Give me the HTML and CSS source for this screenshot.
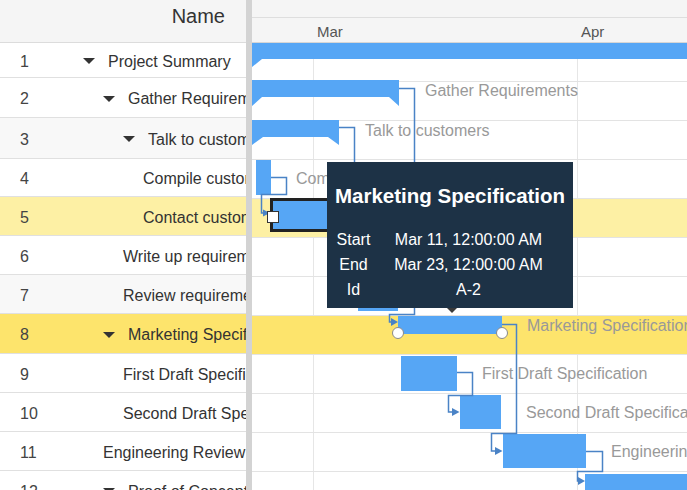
FILE: index.html
```html
<!DOCTYPE html>
<html>
<head>
<meta charset="utf-8">
<title>Gantt</title>
<link rel="stylesheet" href="styles.css">
</head>
<body>
<div class="gantt">
  <section class="grid">
    <div class="grid-head"><span>Name</span></div>
    <div class="row h35"><span class="num">1</span><span class="name"><i class="caret"></i>Project Summary</span></div>
    <div class="row h40"><span class="num">2</span><span class="name l1"><i class="caret"></i>Gather Requirements</span></div>
    <div class="row h41 alt"><span class="num">3</span><span class="name l2"><i class="caret"></i>Talk to customers</span></div>
    <div class="row h38"><span class="num">4</span><span class="name l3">Compile customer list</span></div>
    <div class="row sel-light"><span class="num">5</span><span class="name l3">Contact customers</span></div>
    <div class="row"><span class="num">6</span><span class="name l2">Write up requirements</span></div>
    <div class="row alt"><span class="num">7</span><span class="name l2">Review requirements</span></div>
    <div class="row h40 sel"><span class="num">8</span><span class="name l1"><i class="caret"></i>Marketing Specification</span></div>
    <div class="row"><span class="num">9</span><span class="name l2">First Draft Specification</span></div>
    <div class="row"><span class="num">10</span><span class="name l2">Second Draft Specification</span></div>
    <div class="row"><span class="num">11</span><span class="name l1">Engineering Review</span></div>
    <div class="row"><span class="num">12</span><span class="name l1"><i class="caret"></i>Proof of Concept</span></div>
  </section>
  <div class="splitter"></div>
  <section class="chart">
    <div class="time-head">
      <div class="band-top"></div>
      <div class="band-months">
        <span></span>
        <span class="month">Mar</span>
        <span class="month">Apr</span>
      </div>
    </div>
    <div class="chart-body">
      <div class="c-row h35"></div>
      <div class="c-row h40"></div>
      <div class="c-row h41"></div>
      <div class="c-row h38"></div>
      <div class="c-row sel-light"></div>
      <div class="c-row"></div>
      <div class="c-row"></div>
      <div class="c-row h40 sel"></div>
      <div class="c-row"></div>
      <div class="c-row"></div>
      <div class="c-row"></div>
      <div class="c-row"></div>

      <svg class="canvas" viewBox="252 43 435 447" width="435" height="447">
        <g class="bar">
          <polygon points="252,43 700,43 700,59 262,59 252,67"/>
          <polygon points="252,80 399,80 399,106 389,97 262,97 252,106"/>
          <polygon points="252,120 339,120 339,145 328,137 263,137 252,145"/>
          <rect x="256" y="160" width="15" height="35"/>
          <rect x="358" y="277" width="40" height="34"/>
          <rect x="398" y="316" width="104" height="18"/>
          <rect x="401" y="356" width="56" height="35"/>
          <rect x="460" y="395" width="41" height="34"/>
          <rect x="503" y="434" width="83" height="34"/>
          <rect x="585" y="474" width="120" height="36"/>
          <rect class="picked" x="271.5" y="199.5" width="75" height="31"/>
        </g>
        <g class="link">
          <path d="M399 88.5 H414.5 V314.5 H389.5 V322 H392"/>
          <path d="M339 127.5 H354.5 V175"/>
          <path d="M271 177.5 H286.5 V194.5 H261.5 V213 H264"/>
          <path d="M502 324.5 H516.5 V433.5 H491.5 V451 H495"/>
          <path d="M457 372.5 H472.5 V395.5 H448.5 V412 H452"/>
          <path d="M586 451.5 H602.5 V471.5 H577.5 V481 H579"/>
        </g>
        <g class="arrow">
          <polygon points="391,318 398,322 391,326"/>
          <polygon points="263,209.5 270,213 263,216.5"/>
          <polygon points="495,447 502.5,451 495,455"/>
          <polygon points="452,408 459.5,412 452,416"/>
          <polygon points="578,477 585,481 578,485"/>
        </g>
        <rect class="handle-sq" x="267.5" y="211.5" width="11" height="11"/>
        <circle class="handle" cx="398" cy="333" r="5.5"/>
        <circle class="handle" cx="502" cy="333" r="5.5"/>
        <g class="label">
          <text x="425" y="95.5">Gather Requirements</text>
          <text x="365" y="135.5">Talk to customers</text>
          <text x="296" y="183.5">Compile customer list</text>
          <text x="423" y="299">Review requirements</text>
          <text x="527" y="331">Marketing Specification</text>
          <text x="482" y="378.5">First Draft Specification</text>
          <text x="526" y="417.5">Second Draft Specification</text>
          <text x="611" y="456.5">Engineering Review</text>
        </g>
      </svg>

      <div class="tooltip">
        <div class="tt-title">Marketing Specification</div>
        <div class="tt-table">
          <span>Start</span><span>Mar 11, 12:00:00 AM</span>
          <span>End</span><span>Mar 23, 12:00:00 AM</span>
          <span>Id</span><span>A-2</span>
        </div>
        <i class="tt-arrow"></i>
      </div>
    </div>
  </section>
</div>
</body>
</html>
```
FILE: styles.css
```css
* { box-sizing: border-box; }
html, body { margin: 0; padding: 0; }
body {
  font-family: "Liberation Sans", Arial, sans-serif;
  background: #fff;
  overflow: hidden;
}
.gantt {
  display: flex;
  width: 687px;
  height: 490px;
  overflow: hidden;
}

/* ---- left grid ---- */
.grid {
  width: 246px;
  flex: none;
  overflow: hidden;
}
.grid-head {
  height: 43px;
  background: #f5f5f5;
  border-bottom: 1px solid #dcdcdc;
  display: flex;
  justify-content: flex-end;
  padding: 5px 21px 0 0;
  font-size: 20px;
  color: #333;
}
.row {
  display: flex;
  align-items: center;
  height: 39px;
  padding-top: 3px;
  border-bottom: 1px solid #e0e0e0;
  font-size: 16px;
  color: #333;
  white-space: nowrap;
  background: #fff;
}
.h35 { height: 35px; }
.h38 { height: 38px; }
.h40 { height: 40px; }
.h41 { height: 41px; }
.alt { background: #f8f8f8; }
.sel-light { background: #fdf0a4; }
.sel { background: #fde46c; }
.num {
  flex: none;
  width: 83px;
  padding-left: 20px;
  color: #444;
}
.name {
  display: flex;
  align-items: center;
}
.l1 { padding-left: 20px; }
.l2 { padding-left: 40px; }
.l3 { padding-left: 60px; }
.caret {
  width: 0;
  height: 0;
  border-left: 6px solid transparent;
  border-right: 6px solid transparent;
  border-top: 6px solid #333;
  margin-right: 13px;
  margin-top: -1px;
}

.splitter {
  flex: none;
  width: 6px;
  background: #d3d3d3;
}

/* ---- chart ---- */
.chart {
  flex: 1;
  min-width: 0;
  overflow: hidden;
}
.time-head { background: #f5f5f5; }
.band-top {
  height: 18px;
  border-bottom: 1px solid #dedede;
}
.band-months {
  height: 25px;
  border-bottom: 1px solid #d6d6d6;
  display: grid;
  grid-template-columns: 61px 264px 1fr;
  align-items: center;
  padding-top: 2px;
}
.month {
  padding-left: 4px;
  font-size: 15px;
  color: #555;
}
.chart-body {
  position: relative;
  height: 447px;
}
.c-row {
  height: 39px;
  border-bottom: 1px solid #e3e3e3;
  background:
    linear-gradient(to right, transparent 61px, #e6e6e6 61px, #e6e6e6 62px, transparent 62px),
    linear-gradient(to right, transparent 325px, #e6e6e6 325px, #e6e6e6 326px, transparent 326px),
    #fff;
}
.c-row.sel-light { background: #fdf0a4; }
.c-row.sel { background: #fde46c; }

.canvas {
  position: absolute;
  left: 0;
  top: 0;
  display: block;
}
.bar { fill: #56a6f5; }
.bar .picked { stroke: #222; stroke-width: 3; }
.link { fill: none; stroke: #4a83c6; stroke-width: 1.5; }
.arrow { fill: #4a83c6; }
.handle-sq { fill: #fff; stroke: #333; stroke-width: 1; }
.handle { fill: #fff; stroke: #8a8a8a; stroke-width: 1; }
.label text {
  font-family: "Liberation Sans", Arial, sans-serif;
  font-size: 16px;
  fill: #999;
}

/* ---- tooltip ---- */
.tooltip {
  position: absolute;
  left: 75px;
  top: 119px;
  width: 246px;
  height: 146px;
  background: #1d3246;
  color: #fff;
  padding: 22px 8px 0;
}
.tt-title {
  font-weight: bold;
  font-size: 20.5px;
  line-height: 24px;
  white-space: nowrap;
}
.tt-table {
  display: grid;
  grid-template-columns: 37px 1fr;
  margin-top: 19px;
  font-size: 16px;
  line-height: 25px;
  text-align: center;
  white-space: nowrap;
}
.tt-arrow {
  position: absolute;
  left: 120px;
  bottom: -5px;
  width: 0;
  height: 0;
  border-left: 5px solid transparent;
  border-right: 5px solid transparent;
  border-top: 5px solid #3a3a3a;
}
```
